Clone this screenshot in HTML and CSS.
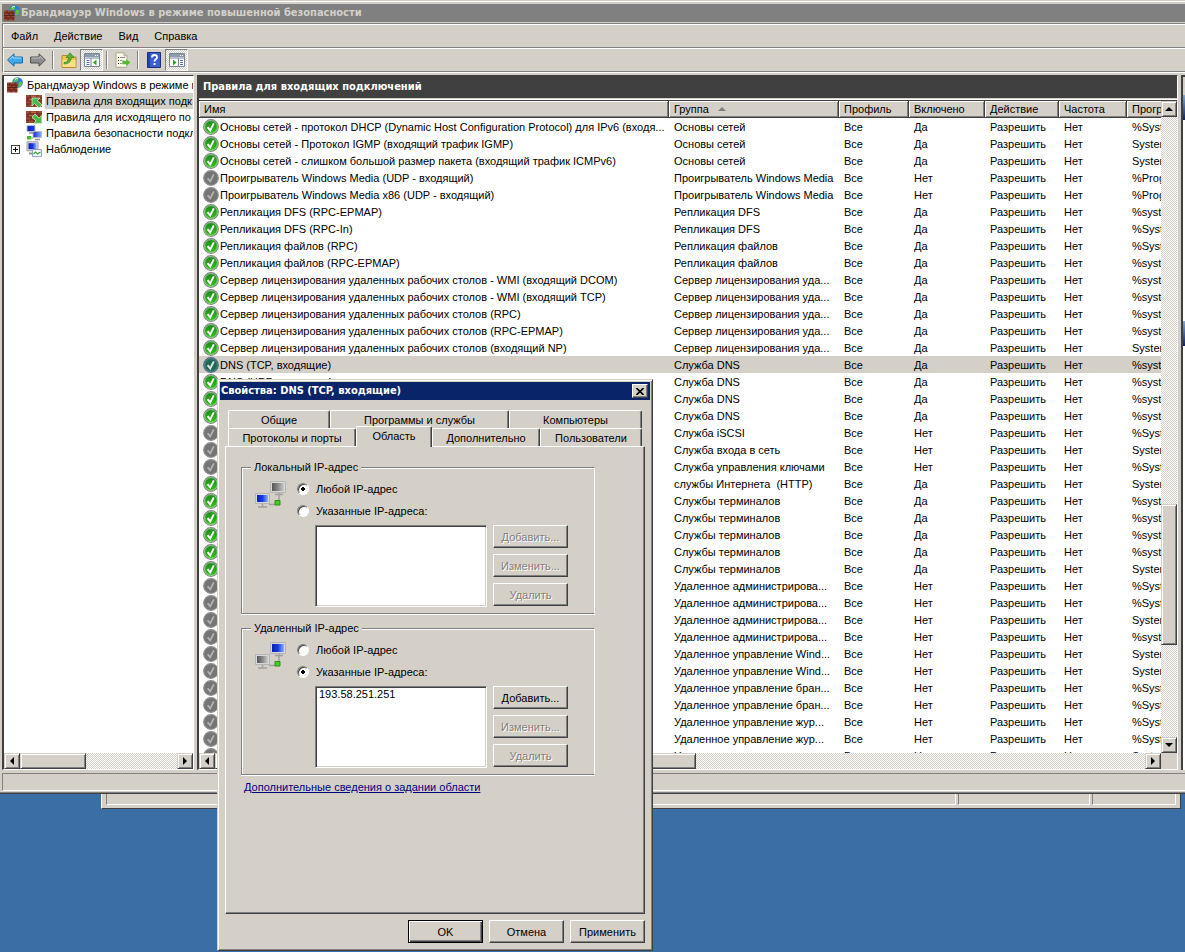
FILE: index.html
```
<!DOCTYPE html>
<html lang="ru">
<head>
    <meta charset="UTF-8">
    <meta name="viewport" content="width=device-width, initial-scale=1.0">
    <title>Брандмауэр Windows в режиме повышенной безопасности</title>
    <link rel="stylesheet" href="styles.css">
</head>
<body>

<svg class="sprite" aria-hidden="true">
    <defs>
        <linearGradient id="greenFill" x1="0" y1="0" x2="0" y2="1">
            <stop offset="0" stop-color="#1d861d"/>
            <stop offset="1" stop-color="#36c41c"/>
        </linearGradient>
        <linearGradient id="screenFill" x1="0" y1="0" x2="1" y2="0">
            <stop offset="0" stop-color="#0a1fb4"/>
            <stop offset=".5" stop-color="#1a3be0"/>
            <stop offset="1" stop-color="#8fb0ff"/>
        </linearGradient>
        <linearGradient id="offFill" x1="0" y1="0" x2="1" y2="0">
            <stop offset="0" stop-color="#555"/>
            <stop offset=".5" stop-color="#888"/>
            <stop offset="1" stop-color="#ccc"/>
        </linearGradient>
    </defs>
    <symbol id="on" viewBox="0 0 16 16">
        <circle cx="8" cy="8" r="7.3" fill="url(#greenFill)" stroke="#858585" stroke-width="1.2"/>
        <circle cx="8" cy="8" r="6.4" fill="none" stroke="#d5e8d2" stroke-width=".6"/>
        <path d="M4.600 8.200l2.600 3.200 3.600-7" fill="none" stroke="#fff" stroke-width="1.900"/>
    </symbol>
    <symbol id="onSelected" viewBox="0 0 16 16">
        <circle cx="8" cy="8" r="7.3" fill="#1f6a50" stroke="#56678c" stroke-width="1.2"/>
        <circle cx="8" cy="8" r="6.4" fill="none" stroke="#6f93a6" stroke-width=".6"/>
        <path d="M4.600 8.200l2.600 3.200 3.600-7" fill="none" stroke="#dfe6ef" stroke-width="1.900"/>
    </symbol>
    <symbol id="off" viewBox="0 0 16 16">
        <circle cx="8" cy="8" r="7.3" fill="#757575" stroke="#8e8e8e" stroke-width="1.2"/>
        <path d="M4.600 8.200l2.600 3.200 3.600-7" fill="none" stroke="#b4b4b4" stroke-width="1.700"/>
    </symbol>
    <symbol id="firewall" viewBox="0 0 16 16">
        <circle cx="10.500" cy="5.500" r="5.300" fill="#2a7fd4"/>
        <path d="M7 2q3-2 4 0t-2 3-3 1zM12 5q3-1 3.500 1t-2.500 4-1-5z" fill="#5cc04a"/>
        <path d="M8 2.500q1-1.500 3-1" fill="none" stroke="#d6efff"/>
        <path d="M0 5.500h10.500V15.500H0z" fill="#9c4433"/>
        <path d="M0 8h10.500M0 10.500h10.500M0 13h10.500M3 5.500V8M8 5.500V8M5 8v2.500M9 8v2.500M2 10.500V13M7 10.500V13M4 13v2.500M9 13v2.500" stroke="#4f1d14" stroke-width=".8"/>
    </symbol>
    <symbol id="bricks" viewBox="0 0 16 16">
        <path d="M0 2h16v12H0z" fill="#a04a38"/>
        <path d="M0 5h16M0 8h16M0 11h16M4 2v3M11 2v3M2 5v3M8 5v3M13 5v3M5 8v3M11 8v3M2 11v3M8 11v3M13 11v3" stroke="#5c2419" stroke-width=".8"/>
        <path d="M5 3.500h5M3 6.500h4M6 9.500h4M9 12.500h3" stroke="#c46a52" stroke-width=".8"/>
    </symbol>
    <symbol id="inbound" viewBox="0 0 16 16">
        <use href="#bricks" width="16" height="16"/>
        <path d="M6 5h8l-2.500 2.500 4.500 4.500-3 3-4.500-4.500L6 13z" fill="#4fb84c" stroke="#e0f4da" stroke-width=".7"/>
    </symbol>
    <symbol id="outbound" viewBox="0 0 16 16">
        <use href="#bricks" width="16" height="16"/>
        <path d="M15.600 14.600h-8L10 12 6 8l3-3 4 4 2.600-2.400z" fill="#4fb84c" stroke="#e0f4da" stroke-width=".7"/>
    </symbol>
    <symbol id="security" viewBox="0 0 16 16">
        <path d="M1 .5h8v6H1zM7 6.500h8.500v6H7z" fill="url(#screenFill)" stroke="#b9bcc4"/>
        <path d="M3 8h4M9 14.500h5" stroke="#8d8f96" stroke-width="1.500"/>
        <path d="M1 11h4v3.500H1z" fill="#43bb2c"/>
        <path d="M5 13h2.500" stroke="#8d8f96"/>
    </symbol>
    <symbol id="monitoring" viewBox="0 0 16 16">
        <path d="M1 .8h11v9H1z" fill="#dcdcdc" stroke="#9b9ea8"/>
        <path d="M2.500 2.200h8v6h-8z" fill="url(#screenFill)"/>
        <path d="M3 12.500h5" stroke="#8d8f96" stroke-width="2"/>
        <path d="M6.500 8.500h9v7h-9z" fill="#f4f8ff" stroke="#8e9fc0"/>
        <path d="M7.500 13l2-2 2 2 3-2" fill="none" stroke="#34a52c" stroke-width="1.200"/>
    </symbol>
    <symbol id="back" viewBox="0 0 16 16">
        <path d="M.6 8L7 1.800V5h8.400v6H7v3.200z" fill="#3fa9ea" stroke="#1767a8"/>
        <path d="M2.500 7.500L6 4.200V6h8.400" fill="none" stroke="#a4dcff"/>
    </symbol>
    <symbol id="forward" viewBox="0 0 16 16">
        <path d="M15.400 8L9 1.800V5H.6v6H9v3.200z" fill="#8d8d8d" stroke="#4f4f4f"/>
        <path d="M1.500 6H10V4.200l3.500 3.300" fill="none" stroke="#bdbdbd"/>
    </symbol>
    <symbol id="folder" viewBox="0 0 16 16">
        <path d="M1 3.500h5l1.500 1.500H15v10.500H1z" fill="#f2c64e" stroke="#b98b25"/>
        <path d="M1.500 8h13v7h-13z" fill="#fbdf86"/>
        <path d="M3 10.500q4 0 4.500-5H5L9 .8l4 4.700h-2.500q-.5 6.500-7.500 6.500z" fill="#55b437" stroke="#2f7d1c" stroke-width=".6"/>
    </symbol>
    <symbol id="showTree" viewBox="0 0 16 16">
        <path d="M.5 1.500h15v13H.5z" fill="#fff" stroke="#7b8694"/>
        <path d="M1 2h14v3H1z" fill="#8d9bae"/>
        <path d="M11 3.500h1M13 3.500h1" stroke="#fff"/>
        <path d="M1 6h14M7 6v8.500" stroke="#7b8694"/>
        <path d="M2.500 8.500h3M2.500 10.500h3M2.500 12.500h3" stroke="#4a76b8"/>
        <path d="M12.500 7.500v6L9 10.500z" fill="#2fa425"/>
    </symbol>
    <symbol id="showActions" viewBox="0 0 16 16">
        <path d="M.5 1.500h15v13H.5z" fill="#fff" stroke="#7b8694"/>
        <path d="M1 2h14v3H1z" fill="#8d9bae"/>
        <path d="M11 3.500h1M13 3.500h1" stroke="#fff"/>
        <path d="M1 6h14M9.500 6v8.500" stroke="#7b8694"/>
        <path d="M11 8.500h3M11 10.500h3M11 12.500h3" stroke="#4a76b8"/>
        <path d="M4 7.500v6l3.500-3z" fill="#2fa425"/>
    </symbol>
    <symbol id="export" viewBox="0 0 16 16">
        <path d="M1 .8h8l3 3v11.500H1z" fill="#fdfbe8" stroke="#a9a78e"/>
        <path d="M9 .8v3h3" fill="none" stroke="#a9a78e"/>
        <path d="M3 5.500h1M3 8.500h1M3 11.500h1" stroke="#333"/>
        <path d="M5 5.500h5M5 8.500h4M5 11.500h3" stroke="#8a8a8a"/>
        <path d="M7 8.500h4V6l5 4.500-5 4.500v-2.500H7z" fill="#5cb83a" stroke="#fff" stroke-width=".5"/>
    </symbol>
    <symbol id="help" viewBox="0 0 16 16">
        <path d="M1.500.5h13v15h-13z" fill="#3a5fd0" stroke="#1c3080"/>
        <path d="M3 1v14" stroke="#2443a6" stroke-width="2"/>
        <path d="M6 5.500q0-2.500 2.500-2.500t2.500 2.200q0 1.500-1.500 2.300-1 .6-1 2" fill="none" stroke="#fff" stroke-width="1.800"/>
        <path d="M7.600 11h1.900v2H7.600z" fill="#fff"/>
    </symbol>
    <symbol id="netLocal" viewBox="0 0 32 28">
        <path d="M15.500.5h15v11h-15z" fill="#d8d8d8" stroke="#b4b4b4"/>
        <path d="M17 2h12v8H17z" fill="url(#offFill)"/>
        <path d="M.5 12.500h14v10H.5z" fill="#d8d8d8" stroke="#b4b4b4"/>
        <path d="M2 14h11v7H2z" fill="url(#screenFill)"/>
        <path d="M20 13.500h8M24 12v9M14 23.500h6M3 26h9M7.500 23v3" fill="none" stroke="#a0a0a0" stroke-width="1.500"/>
        <path d="M20 19.500h5V24h-5z" fill="#3fd022" stroke="#2c8f18"/>
    </symbol>
    <symbol id="netRemote" viewBox="0 0 32 28">
        <path d="M15.500.5h15v11h-15z" fill="#d8d8d8" stroke="#b4b4b4"/>
        <path d="M17 2h12v8H17z" fill="url(#screenFill)"/>
        <path d="M.5 12.500h14v10H.5z" fill="#d8d8d8" stroke="#b4b4b4"/>
        <path d="M2 14h11v7H2z" fill="url(#offFill)"/>
        <path d="M20 13.500h8M24 12v9M14 23.500h6M3 26h9M7.500 23v3" fill="none" stroke="#a0a0a0" stroke-width="1.500"/>
        <path d="M20 19.500h5V24h-5z" fill="#3fd022" stroke="#2c8f18"/>
    </symbol>
</svg>

<div class="back-window">
    <div class="back-cell"></div>
    <div class="back-cell cell-medium"></div>
    <div class="back-cell cell-small"></div>
</div>

<main class="main-window">
    <header class="titlebar">
        <svg class="icon"><use href="#firewall"/></svg>
        <h1>Брандмауэр Windows в режиме повышенной безопасности</h1>
    </header>

    <nav class="menubar">
        <button type="button">Файл</button>
        <button type="button">Действие</button>
        <button type="button">Вид</button>
        <button type="button">Справка</button>
    </nav>

    <div class="toolbar">
        <button type="button" aria-label="Назад"><svg class="icon"><use href="#back"/></svg></button>
        <button type="button" aria-label="Вперед"><svg class="icon"><use href="#forward"/></svg></button>
        <span class="separator"></span>
        <button type="button" aria-label="Вверх"><svg class="icon"><use href="#folder"/></svg></button>
        <button type="button" class="pressed" aria-label="Дерево консоли"><svg class="icon"><use href="#showTree"/></svg></button>
        <span class="separator"></span>
        <button type="button" aria-label="Экспорт"><svg class="icon"><use href="#export"/></svg></button>
        <span class="separator"></span>
        <button type="button" aria-label="Справка"><svg class="icon"><use href="#help"/></svg></button>
        <button type="button" class="pressed" aria-label="Панель действий"><svg class="icon"><use href="#showActions"/></svg></button>
    </div>

    <div class="panes">
        <aside class="tree-pane">
            <ul class="tree">
                <li class="root"><svg class="icon"><use href="#firewall"/></svg><span>Брандмауэр Windows в режиме п</span></li>
                <li class="selected"><svg class="icon"><use href="#inbound"/></svg><span>Правила для входящих подк</span></li>
                <li><svg class="icon"><use href="#outbound"/></svg><span>Правила для исходящего по</span></li>
                <li><svg class="icon"><use href="#security"/></svg><span>Правила безопасности подкл</span></li>
                <li class="branch"><button type="button" class="expander" aria-label="Развернуть"></button><svg class="icon"><use href="#monitoring"/></svg><span>Наблюдение</span></li>
            </ul>
            <div class="scroll-x tree-scroll">
                <button type="button" class="arrow left" aria-label="Влево"></button>
                <div class="thumb"></div>
                <div class="rest"></div>
                <button type="button" class="arrow right" aria-label="Вправо"></button>
            </div>
        </aside>

        <section class="rules-pane">
            <h2>Правила для входящих подключений</h2>
            <div class="list">
                <div class="list-view">
                    <table class="rules">
                        <colgroup>
                            <col class="col-name">
                            <col class="col-group">
                            <col class="col-profile">
                            <col class="col-enabled">
                            <col class="col-action">
                            <col class="col-override">
                            <col class="col-program">
                        </colgroup>
                        <thead>
                            <tr>
                                <th>Имя</th>
                                <th>Группа<span class="sort-mark"></span></th>
                                <th>Профиль</th>
                                <th>Включено</th>
                                <th>Действие</th>
                                <th>Частота</th>
                                <th>Прогр</th>
                            </tr>
                        </thead>
                        <tbody id="rules"></tbody>
                    </table>
                </div>
                <div class="scroll-y">
                    <button type="button" class="arrow up" aria-label="Вверх"></button>
                    <div class="before"></div>
                    <div class="thumb"></div>
                    <div class="rest"></div>
                    <button type="button" class="arrow down" aria-label="Вниз"></button>
                </div>
                <div class="scroll-x list-scroll">
                    <button type="button" class="arrow left" aria-label="Влево"></button>
                    <div class="thumb"></div>
                    <div class="rest"></div>
                    <button type="button" class="arrow right" aria-label="Вправо"></button>
                </div>
            </div>
        </section>

        <aside class="actions-pane">
            <div class="actions-head"></div>
            <div class="actions-group first"></div>
            <div class="actions-group"></div>
        </aside>
    </div>

    <footer class="statusbar"></footer>
</main>

<div class="dialog" role="dialog" aria-labelledby="dialogTitle">
    <div class="dialog-title">
        <h2 id="dialogTitle">Свойства: DNS (TCP, входящие)</h2>
        <button type="button" class="close" aria-label="Закрыть">
            <svg viewBox="0 0 8 7"><path d="M.5 0l7 7M7.500 0l-7 7" stroke="#000" stroke-width="1.600"/></svg>
        </button>
    </div>

    <div class="tabs" role="tablist">
        <div class="tab-row">
            <button type="button" role="tab" class="tab tab-general">Общие</button>
            <button type="button" role="tab" class="tab tab-programs">Программы и службы</button>
            <button type="button" role="tab" class="tab tab-computers">Компьютеры</button>
        </div>
        <div class="tab-row">
            <button type="button" role="tab" class="tab tab-protocols">Протоколы и порты</button>
            <button type="button" role="tab" class="tab tab-scope active" aria-selected="true">Область</button>
            <button type="button" role="tab" class="tab tab-advanced">Дополнительно</button>
            <button type="button" role="tab" class="tab tab-users">Пользователи</button>
        </div>
    </div>

    <form class="tab-page">
        <fieldset>
            <legend>Локальный IP-адрес</legend>
            <div class="scope">
                <svg class="scope-icon"><use href="#netLocal"/></svg>
                <div class="scope-body">
                    <label class="radio"><input type="radio" name="local" checked>Любой IP-адрес</label>
                    <label class="radio"><input type="radio" name="local">Указанные IP-адреса:</label>
                    <div class="address">
                        <select size="5" aria-label="Локальные IP-адреса"></select>
                        <div class="address-buttons">
                            <button type="button" class="btn" disabled>Добавить...</button>
                            <button type="button" class="btn" disabled>Изменить...</button>
                            <button type="button" class="btn" disabled>Удалить</button>
                        </div>
                    </div>
                </div>
            </div>
        </fieldset>

        <fieldset>
            <legend>Удаленный IP-адрес</legend>
            <div class="scope">
                <svg class="scope-icon"><use href="#netRemote"/></svg>
                <div class="scope-body">
                    <label class="radio"><input type="radio" name="remote">Любой IP-адрес</label>
                    <label class="radio"><input type="radio" name="remote" checked>Указанные IP-адреса:</label>
                    <div class="address">
                        <select size="5" aria-label="Удаленные IP-адреса">
                            <option>193.58.251.251</option>
                        </select>
                        <div class="address-buttons">
                            <button type="button" class="btn">Добавить...</button>
                            <button type="button" class="btn" disabled>Изменить...</button>
                            <button type="button" class="btn" disabled>Удалить</button>
                        </div>
                    </div>
                </div>
            </div>
        </fieldset>

        <a class="more" href="#">Дополнительные сведения о задании области</a>
    </form>

    <div class="dialog-buttons">
        <button type="button" class="btn default">OK</button>
        <button type="button" class="btn">Отмена</button>
        <button type="button" class="btn">Применить</button>
    </div>
</div>

<script src="script.js"></script>
</body>
</html>
```
FILE: styles.css
```
* {
    box-sizing: border-box;
}
body {
    margin: 0;
    height: 100vh;
    overflow: hidden;
    background-color: #3a6ea5;
    color: #000;
    font: 11px/14px "Liberation Sans", Arial, sans-serif;
}
h1, h2 {
    margin: 0;
    font: bold 11px/14px "DejaVu Sans Condensed", Tahoma, sans-serif;
    white-space: nowrap;
}
button, select, option {
    font: inherit;
    color: inherit;
    padding: 0;
    border-radius: 0;
}
.sprite {
    position: absolute;
    width: 0;
    height: 0;
}
.icon {
    width: 16px;
    height: 16px;
    flex: none;
}

/* window behind the console */
.back-window {
    position: absolute;
    left: 101px;
    right: 4px;
    bottom: 143px;
    height: 40px;
    display: flex;
    gap: 2px;
    padding: 0 4px 3px;
    background-color: #d4d0c8;
    border: 1px solid #404040;
    border-left-color: #fff;
}
.back-cell {
    flex: 1;
    border: 1px solid #fff;
    border-left-color: #808080;
}
.cell-medium {
    flex: none;
    width: 132px;
}
.cell-small {
    flex: none;
    width: 84px;
}

/* console window */
.main-window {
    position: relative;
    display: flex;
    flex-direction: column;
    height: calc(100vh - 158px);
    padding: 2px 0 2px 2px;
    background-color: #d4d0c8;
    border-top: 1px solid #d4d0c8;
    border-bottom: 1px solid #404040;
    box-shadow: inset 0 1px #fff, inset 0 -1px #808080;
}
.titlebar {
    display: flex;
    align-items: center;
    gap: 1px;
    height: 18px;
    margin: 1px 0;
    padding-left: 2px;
    background-color: #808080;
    color: #d4d0c8;
}
.menubar, .toolbar {
    display: flex;
    flex: none;
    border-top: 1px solid #808080;
    border-left: 1px solid #808080;
    box-shadow: inset 0 1px #fff, inset 1px 0 #fff;
}
.menubar {
    height: 24px;
}
.menubar button {
    border: none;
    background: none;
    padding: 0 8px;
}
.toolbar {
    height: 26px;
    align-items: center;
    padding: 1px 0;
    border-bottom: 1px solid #fff;
    box-shadow: inset 0 1px #fff, inset 1px 0 #fff, inset 0 -1px #808080;
}
.toolbar button {
    display: flex;
    align-items: center;
    justify-content: center;
    width: 23px;
    height: 22px;
    border: 1px solid transparent;
    background: none;
}
.toolbar .pressed {
    border-color: #808080 #fff #fff #808080;
    background: repeating-conic-gradient(#fff 0 25%, #d4d0c8 0 50%) 0 0 / 2px 2px;
}
.separator {
    width: 2px;
    height: 18px;
    margin: 0 3px;
    border-left: 1px solid #808080;
    border-right: 1px solid #fff;
}

.panes {
    display: flex;
    flex: 1;
    gap: 3px;
    min-height: 0;
    margin: 2px 0 3px;
}
.tree-pane {
    display: flex;
    flex-direction: column;
    flex: none;
    width: 192px;
    background-color: #fff;
    border: 1px solid #fff;
    border-top-color: #404040;
    border-left: 2px solid #404040;
}
.tree {
    flex: 1;
    margin: 0;
    padding: 1px 0 0;
    list-style: none;
}
.tree li {
    display: flex;
    align-items: center;
    height: 16px;
    padding-left: 22px;
    gap: 3px;
    white-space: nowrap;
    overflow: hidden;
}
.tree .root {
    padding-left: 3px;
}
.tree .branch {
    padding-left: 7px;
}
.tree span {
    flex: 1;
    padding-left: 1px;
    line-height: 16px;
}
.tree .selected span {
    background-color: #d4d0c8;
}
.expander {
    width: 9px;
    height: 9px;
    margin-right: 3px;
    border: 1px solid #404040;
    background:
        linear-gradient(#000, #000) center / 5px 1px no-repeat,
        linear-gradient(#000, #000) center / 1px 5px no-repeat,
        #fff;
}

/* scroll bars */
.scroll-x, .scroll-y {
    display: flex;
    flex: none;
    background: repeating-conic-gradient(#fff 0 25%, #d4d0c8 0 50%) 0 0 / 2px 2px;
}
.scroll-x {
    height: 16px;
}
.scroll-y {
    flex-direction: column;
}
.arrow, .thumb {
    background-color: #d4d0c8;
    border: 1px solid;
    border-color: #d4d0c8 #404040 #404040 #d4d0c8;
    box-shadow: inset 1px 1px #fff, inset -1px -1px #808080;
}
.arrow {
    display: flex;
    align-items: center;
    justify-content: center;
    flex: none;
    width: 16px;
    height: 16px;
}
.arrow::before {
    content: "";
    border: 4px solid transparent;
}
.left::before {
    border-left-width: 0;
    border-right-color: #000;
}
.right::before {
    border-right-width: 0;
    border-left-color: #000;
}
.up::before {
    border-top-width: 0;
    border-bottom-color: #000;
}
.down::before {
    border-bottom-width: 0;
    border-top-color: #000;
}
.tree-scroll .thumb {
    flex: 65;
}
.tree-scroll .rest {
    flex: 92;
}
.list-scroll .thumb {
    flex: 48;
}
.list-scroll .rest {
    flex: 45;
}
.scroll-y .before {
    flex: 97;
}
.scroll-y .thumb {
    flex: 35;
}
.scroll-y .rest {
    flex: 23;
}

/* rules list */
.rules-pane {
    display: flex;
    flex-direction: column;
    flex: 1;
    min-width: 0;
    background-color: #d4d0c8;
    border: 1px solid #fff;
    border-top-color: #404040;
    border-left: 2px solid #404040;
}
.rules-pane h2 {
    padding: 4px;
    background-color: #404040;
    color: #fff;
}
.list {
    display: grid;
    flex: 1;
    grid-template-columns: minmax(0, 1fr) 16px;
    grid-template-rows: minmax(0, 1fr) 16px;
    min-height: 0;
    border-top: 1px solid #404040;
    box-shadow: 0 -1px #fff;
    margin-top: 2px;
}
.list-view {
    overflow: hidden;
    background-color: #fff;
}
.rules {
    width: 1028px;
    table-layout: fixed;
    border-collapse: separate;
    border-spacing: 0;
}
.col-name { width: 470px; }
.col-group { width: 170px; }
.col-profile { width: 70px; }
.col-enabled { width: 76px; }
.col-action { width: 74px; }
.col-override { width: 68px; }
.col-program { width: 100px; }
.rules th {
    height: 17px;
    padding: 1px 5px 0;
    line-height: 15px;
    font-weight: normal;
    text-align: left;
    background-color: #d4d0c8;
    border-right: 1px solid #404040;
    border-bottom: 1px solid #404040;
    box-shadow: inset 1px 1px #fff, inset -1px -1px #808080;
}
.sort-mark {
    display: inline-block;
    margin: 0 0 2px 9px;
    border: 4px solid transparent;
    border-top-width: 0;
    border-bottom-color: #808080;
}
.rules td {
    height: 17px;
    padding: 0 5px;
    line-height: 16px;
    white-space: nowrap;
    overflow: hidden;
}
.rules .name {
    display: flex;
    align-items: center;
    gap: 1px;
    padding: 0 4px;
}
.rules .selected td {
    background-color: #d4d0c8;
}

.actions-pane {
    flex: none;
    width: 4px;
    background-color: #fff;
    border-left: 2px solid #404040;
    border-top: 2px solid #404040;
}
.actions-head {
    height: 18px;
    background-color: #d4d0c8;
}
.actions-group {
    height: 25px;
    background: linear-gradient(#7ea6e0, #0a246a);
}
.actions-group.first {
    margin-bottom: 201px;
}
.statusbar {
    flex: none;
    height: 18px;
    border: 1px solid #808080;
    border-bottom-color: #fff;
    border-right: none;
}

/* properties dialog */
.dialog {
    position: absolute;
    left: 217px;
    top: 379px;
    width: 436px;
    padding: 2px;
    background-color: #d4d0c8;
    border: 1px solid;
    border-color: #d4d0c8 #404040 #404040 #d4d0c8;
    box-shadow: inset 1px 1px #fff, inset -1px -1px #808080;
}
.dialog-title {
    display: flex;
    align-items: center;
    justify-content: space-between;
    height: 18px;
    padding: 0 2px 0 1px;
    background-color: #0a246a;
    color: #fff;
}
.close {
    display: flex;
    align-items: center;
    justify-content: center;
    width: 16px;
    height: 14px;
    background-color: #d4d0c8;
    border: 1px solid;
    border-color: #fff #404040 #404040 #fff;
    box-shadow: inset -1px -1px #808080;
}
.close svg {
    width: 8px;
    height: 7px;
}
.tabs {
    padding: 10px 8px 0;
}
.tab-row {
    display: flex;
    height: 18px;
}
.tab {
    background-color: #d4d0c8;
    border: 1px solid;
    border-color: #fff #404040 transparent #fff;
    border-bottom: none;
    border-radius: 2px 2px 0 0;
    box-shadow: inset -1px 0 #808080;
}
.tab-general { width: 102px; }
.tab-programs { width: 179px; }
.tab-computers { flex: 1; }
.tab-protocols { width: 128px; }
.tab-scope { width: 76px; }
.tab-advanced { width: 108px; }
.tab-users { flex: 1; }
.tab.active {
    position: relative;
    height: 21px;
    margin-top: -2px;
    padding-bottom: 3px;
}
.tab-page {
    height: 468px;
    margin: 0 5px;
    padding: 13px 49px 0 15px;
    border: 1px solid;
    border-color: #fff #404040 #404040 #fff;
    box-shadow: inset -1px -1px #808080;
}
fieldset {
    min-width: 0;
    margin: 0 0 7px;
    padding: 7px 26px 6px 13px;
    border: 1px solid #808080;
    border-right-color: #fff;
    box-shadow: inset 1px 1px #fff, 0 1px #fff;
}
fieldset:last-of-type {
    margin-bottom: 5px;
}
legend {
    margin-left: -4px;
    padding: 0 3px;
    background-color: #d4d0c8;
}
.scope {
    display: flex;
    gap: 10px;
}
.scope-icon {
    flex: none;
    width: 32px;
    height: 28px;
}
.scope-body {
    display: flex;
    flex: 1;
    flex-direction: column;
    gap: 7px;
}
.radio {
    display: flex;
    align-items: center;
    gap: 7px;
    height: 15px;
}
.radio input {
    appearance: none;
    width: 12px;
    height: 12px;
    margin: 0;
    background-color: #fff;
    border: 1px solid;
    border-color: #808080 #fff #fff #808080;
    border-radius: 50%;
    box-shadow: inset 1px 1px #404040;
}
.radio input:checked {
    background-image: radial-gradient(circle, #000 2px, transparent 2px);
}
.address {
    display: flex;
    gap: 6px;
    margin-left: 18px;
}
.address select {
    appearance: none;
    flex: 1;
    min-width: 0;
    height: 82px;
    overflow: hidden;
    background-color: #fff;
    border: 1px solid;
    border-color: #808080 #fff #fff #808080;
    outline: none;
    box-shadow: inset 1px 1px #404040, inset -1px -1px #d4d0c8;
}
.address option {
    padding: 1px 3px;
    line-height: 14px;
    min-height: 0;
}
.address-buttons {
    display: flex;
    flex-direction: column;
    gap: 6px;
}
.btn {
    width: 75px;
    height: 23px;
    background-color: #d4d0c8;
    border: 1px solid;
    border-color: #fff #404040 #404040 #fff;
    box-shadow: inset -1px -1px #808080;
}
.btn:disabled {
    color: #808080;
    text-shadow: 1px 1px #fff;
}
.btn.default {
    border-color: #000;
    box-shadow: inset 1px 1px #fff, inset -1px -1px #404040, inset -2px -2px #808080;
}
.more {
    display: block;
    width: fit-content;
    margin-left: 3px;
    color: #000080;
}
.dialog-buttons {
    display: flex;
    justify-content: flex-end;
    gap: 6px;
    padding: 6px 5px 5px;
}
```
FILE: script.js
```
// icon, name, group, enabled, program
const rules = [
    ["on", "Основы сетей - протокол DHCP (Dynamic Host Configuration Protocol) для IPv6 (входя...", "Основы сетей", "Да", "%Syst"],
    ["on", "Основы сетей - Протокол IGMP (входящий трафик IGMP)", "Основы сетей", "Да", "System"],
    ["on", "Основы сетей - слишком большой размер пакета (входящий трафик ICMPv6)", "Основы сетей", "Да", "System"],
    ["off", "Проигрыватель Windows Media (UDP - входящий)", "Проигрыватель Windows Media", "Нет", "%Prog"],
    ["off", "Проигрыватель Windows Media x86 (UDP - входящий)", "Проигрыватель Windows Media", "Нет", "%Prog"],
    ["on", "Репликация DFS (RPC-EPMAP)", "Репликация DFS", "Да", "%syst"],
    ["on", "Репликация DFS (RPC-In)", "Репликация DFS", "Да", "%Syst"],
    ["on", "Репликация файлов (RPC)", "Репликация файлов", "Да", "%Syst"],
    ["on", "Репликация файлов (RPC-EPMAP)", "Репликация файлов", "Да", "%syst"],
    ["on", "Сервер лицензирования удаленных рабочих столов - WMI (входящий DCOM)", "Сервер лицензирования уда...", "Да", "%syst"],
    ["on", "Сервер лицензирования удаленных рабочих столов - WMI (входящий TCP)", "Сервер лицензирования уда...", "Да", "%syst"],
    ["on", "Сервер лицензирования удаленных рабочих столов (RPC)", "Сервер лицензирования уда...", "Да", "%syst"],
    ["on", "Сервер лицензирования удаленных рабочих столов (RPC-EPMAP)", "Сервер лицензирования уда...", "Да", "%syst"],
    ["on", "Сервер лицензирования удаленных рабочих столов (входящий NP)", "Сервер лицензирования уда...", "Да", "System"],
    ["onSelected", "DNS (TCP, входящие)", "Служба DNS", "Да", "%syst"],
    ["on", "DNS (UDP, входящие)", "Служба DNS", "Да", "%syst"],
    ["on", "", "Служба DNS", "Да", "%syst"],
    ["on", "", "Служба DNS", "Да", "%syst"],
    ["off", "", "Служба iSCSI", "Нет", "%Syst"],
    ["off", "", "Служба входа в сеть", "Нет", "System"],
    ["off", "", "Служба управления ключами", "Нет", "%Syst"],
    ["on", "", "службы Интернета&nbsp; (HTTP)", "Да", "System"],
    ["on", "", "Службы терминалов", "Да", "%syst"],
    ["on", "", "Службы терминалов", "Да", "%syst"],
    ["on", "", "Службы терминалов", "Да", "%syst"],
    ["on", "", "Службы терминалов", "Да", "%syst"],
    ["on", "", "Службы терминалов", "Да", "System"],
    ["off", "", "Удаленное администрирова...", "Нет", "%Syst"],
    ["off", "", "Удаленное администрирова...", "Нет", "%Syst"],
    ["off", "", "Удаленное администрирова...", "Нет", "System"],
    ["off", "", "Удаленное администрирова...", "Нет", "%syst"],
    ["off", "", "Удаленное управление Wind...", "Нет", "System"],
    ["off", "", "Удаленное управление Wind...", "Нет", "System"],
    ["off", "", "Удаленное управление бран...", "Нет", "%Syst"],
    ["off", "", "Удаленное управление бран...", "Нет", "%Syst"],
    ["off", "", "Удаленное управление жур...", "Нет", "%Syst"],
    ["off", "", "Удаленное управление жур...", "Нет", "%Syst"],
    ["off", "", "Удаленное управление жур...", "Нет", "System"]
];

document.getElementById("rules").innerHTML = rules.map(([icon, name, group, enabled, program]) => `
    <tr class="${icon === "onSelected" ? "selected" : ""}">
        <td class="name"><svg class="icon"><use href="#${icon}"/></svg>${name}</td>
        <td>${group}</td>
        <td>Все</td>
        <td>${enabled}</td>
        <td>Разрешить</td>
        <td>Нет</td>
        <td>${program}</td>
    </tr>`).join("");
```
